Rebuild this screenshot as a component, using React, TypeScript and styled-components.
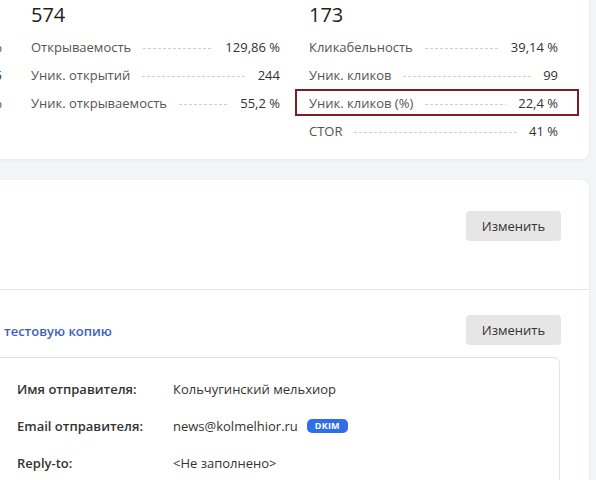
import React from "react";
import styled, { createGlobalStyle } from "styled-components";

const Global = createGlobalStyle`
  html, body { margin: 0; padding: 0; }
  body {
    background: #f4f5f7;
    font-family: "Open Sans", "Noto Sans", sans-serif;
    overflow: hidden;
    width: 596px;
    height: 480px;
  }
`;

const Page = styled.div`
  display: flex;
  flex-direction: column;
  gap: 21px;
  padding-right: 7px;
`;

const Card = styled.section`
  background: #fff;
  border-radius: 8px;
  box-shadow: 0 1px 4px rgba(0, 0, 0, 0.06);
  margin-left: -280px;
`;

const StatsCard = styled(Card)`
  margin-top: -20px;
  padding: 21px 31px 14px 0;
  display: grid;
  grid-template-columns: repeat(3, 249px);
  column-gap: 29px;
  justify-content: end;
`;

const StatColumn = styled.div`
  display: flex;
  flex-direction: column;
  align-items: stretch;
`;

const StatTitle = styled.div`
  align-self: flex-start;
  font-size: 20px;
  line-height: 28px;
  font-weight: 500;
  color: #222;
  margin-bottom: 4px;
`;

const StatRow = styled.div<{ $highlight?: boolean }>`
  position: relative;
  display: flex;
  align-items: center;
  height: 28px;
  font-size: 13px;
  &::after {
    content: "";
    display: ${(p) => (p.$highlight ? "block" : "none")};
    position: absolute;
    left: -14px;
    right: -21px;
    top: 0;
    bottom: 1px;
    border: 2px solid #7a1f22;
  }
`;

const StatLabel = styled.span`
  color: #555;
  white-space: nowrap;
`;

const StatValue = styled.span`
  color: #333;
  white-space: nowrap;
`;

const Dots = styled.span`
  flex: 1;
  height: 1px;
  margin: 3px 12px 0;
  background-image: repeating-linear-gradient(
    to right,
    #cfcfcf 0 3px,
    transparent 3px 5px
  );
`;

const Section = styled.div<{ $top: number; $bottom: number }>`
  padding: ${(p) => p.$top}px 28px ${(p) => p.$bottom}px 284px;
  & + & {
    border-top: 1px solid #e3e3e3;
  }
`;

const SectionHead = styled.div`
  display: flex;
  align-items: center;
  justify-content: space-between;
`;

const EndRow = styled.div`
  display: flex;
  justify-content: flex-end;
`;

const LinkText = styled.a`
  color: #3d5fbe;
  font-size: 13px;
  font-weight: 600;
  text-decoration: none;
  padding-top: 2px;
`;

const Button = styled.button`
  font-family: inherit;
  font-size: 13px;
  color: #333;
  background: #e6e6e6;
  border: none;
  border-radius: 4px;
  height: 30px;
  width: 95px;
  padding: 0;
`;

const InfoBox = styled.div`
  margin: 12px 1px 0 -60px;
  border: 1px solid #e2e2e2;
  border-radius: 6px;
  padding: 12px 0 20px 72px;
  display: grid;
  grid-template-columns: 156px 1fr;
  grid-auto-rows: 37px;
  align-items: center;
`;

const InfoLabel = styled.span`
  font-size: 13px;
  font-weight: 600;
  color: #333;
`;

const InfoValue = styled.span`
  font-size: 13px;
  color: #333;
  display: flex;
  align-items: center;
  gap: 9px;
`;

const Badge = styled.span`
  background: #2f6ee6;
  color: #fff;
  font-size: 9px;
  font-weight: 700;
  line-height: 14px;
  padding: 0 8px;
  border-radius: 5px;
  letter-spacing: 0.2px;
`;

type Stat = { label: string; value: string; highlight?: boolean };

const columns: { title: string; rows: Stat[] }[] = [
  {
    title: "1 316",
    rows: [
      { label: "Доставлено", value: "98,5 %" },
      { label: "Уник. доставлено", value: "445" },
      { label: "Доставляемость", value: "99,5 %" },
    ],
  },
  {
    title: "574",
    rows: [
      { label: "Открываемость", value: "129,86 %" },
      { label: "Уник. открытий", value: "244" },
      { label: "Уник. открываемость", value: "55,2 %" },
    ],
  },
  {
    title: "173",
    rows: [
      { label: "Кликабельность", value: "39,14 %" },
      { label: "Уник. кликов", value: "99" },
      { label: "Уник. кликов (%)", value: "22,4 %", highlight: true },
      { label: "CTOR", value: "41 %" },
    ],
  },
];

const info = [
  { label: "Имя отправителя:", value: "Кольчугинский мельхиор" },
  { label: "Email отправителя:", value: "news@kolmelhior.ru", badge: "DKIM" },
  { label: "Reply-to:", value: "<Не заполнено>" },
];

export default function App() {
  return (
    <>
      <Global />
      <Page>
        <StatsCard>
          {columns.map((c) => (
            <StatColumn key={c.title}>
              <StatTitle>{c.title}</StatTitle>
              {c.rows.map((r) => (
                <StatRow key={r.label} $highlight={r.highlight}>
                  <StatLabel>{r.label}</StatLabel>
                  <Dots />
                  <StatValue>{r.value}</StatValue>
                </StatRow>
              ))}
            </StatColumn>
          ))}
        </StatsCard>
        <Card>
          <Section $top={31} $bottom={48}>
            <EndRow>
              <Button>Изменить</Button>
            </EndRow>
          </Section>
          <Section $top={25} $bottom={0}>
            <SectionHead>
              <LinkText>тестовую копию</LinkText>
              <Button>Изменить</Button>
            </SectionHead>
            <InfoBox>
              {info.map((i) => (
                <React.Fragment key={i.label}>
                  <InfoLabel>{i.label}</InfoLabel>
                  <InfoValue>
                    {i.value}
                    {i.badge && <Badge>{i.badge}</Badge>}
                  </InfoValue>
                </React.Fragment>
              ))}
            </InfoBox>
          </Section>
        </Card>
      </Page>
    </>
  );
}
